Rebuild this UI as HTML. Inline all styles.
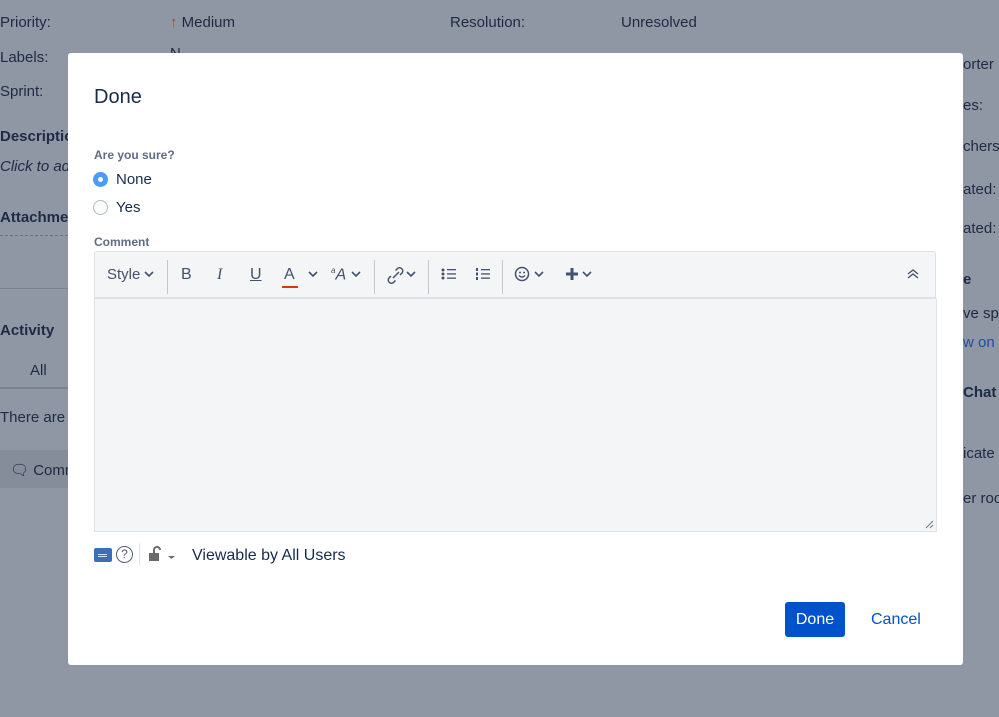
<!DOCTYPE html>
<html><head><style>
body{margin:0;width:999px;height:717px;background:#8f96a4;font-family:"Liberation Sans",sans-serif;position:relative;overflow:hidden;color:#172b4d}
.bg{position:absolute;font-size:15px;color:#1f2a44;white-space:nowrap}
.m{position:absolute;left:68px;top:53px;width:895px;height:612px;background:#fff;border-radius:3px}
.a{position:absolute}
.tb{position:absolute;left:94px;top:251px;width:842px;height:48px;background:#f4f5f7;border:1px solid #dfe1e6;border-bottom:2px solid #dfe1e6;border-radius:3px 3px 0 0;box-sizing:border-box}
.ed{position:absolute;left:94px;top:299px;width:843px;height:233px;background:#f4f5f7;border:1px solid #dfe1e6;border-top:none;box-sizing:border-box}
.sep{position:absolute;top:8px;width:1px;height:34px;background:#c1c7d0}
.ic{position:absolute;top:14px;font-size:16px;color:#42526e}
.chev{position:absolute;top:18px}
</style></head><body>
<div class="bg" style="left:0;top:14px">Priority:</div>
<div class="bg" style="left:170px;top:14px"><span style="color:#a0522d">↑</span> Medium</div>
<div class="bg" style="left:450px;top:14px">Resolution:</div>
<div class="bg" style="left:621px;top:14px">Unresolved</div>
<div class="bg" style="left:0;top:49px">Labels:</div>
<div class="bg" style="left:170px;top:45px">N</div>
<div class="bg" style="left:0;top:83px">Sprint:</div>
<div class="bg" style="left:0;top:128px;font-weight:bold">Description</div>
<div class="bg" style="left:0;top:158px;font-style:italic">Click to add</div>
<div class="bg" style="left:0;top:209px;font-weight:bold">Attachments</div>
<div class="a" style="left:0;top:235px;width:68px;border-top:1px dashed #6b7280"></div>
<div class="a" style="left:0;top:288px;width:68px;border-top:1px solid #7a8190"></div>
<div class="bg" style="left:0;top:322px;font-weight:bold">Activity</div>
<div class="bg" style="left:30px;top:362px">All</div>
<div class="a" style="left:0;top:387px;width:68px;border-top:2px solid #7a8190"></div>
<div class="bg" style="left:0;top:409px">There are</div>
<div class="a" style="left:0;top:450px;width:68px;height:38px;background:#858c9a"></div>
<div class="bg" style="left:10px;top:461px">🗨 Comm</div>
<div class="bg" style="left:963px;top:56px">orter</div>
<div class="bg" style="left:963px;top:97px">es:</div>
<div class="bg" style="left:963px;top:138px">chers</div>
<div class="bg" style="left:963px;top:181px">ated:</div>
<div class="bg" style="left:963px;top:220px">ated:</div>
<div class="bg" style="left:963px;top:271px;font-weight:bold">e</div>
<div class="bg" style="left:963px;top:305px">ve sp</div>
<div class="bg" style="left:963px;top:334px;color:#1d4fa8">w on E</div>
<div class="bg" style="left:963px;top:384px;font-weight:bold">Chat</div>
<div class="bg" style="left:963px;top:445px">icate</div>
<div class="bg" style="left:963px;top:490px">er roo</div>

<div class="m"></div>
<div class="a" style="left:94px;top:86px;font-size:20px">Done</div>
<div class="a" style="left:94px;top:148px;font-size:12px;font-weight:bold;color:#5e6c84">Are you sure?</div>
<div class="a" style="left:93px;top:172px;width:15px;height:15px;border-radius:50%;background:#4c9aff"><div style="position:absolute;left:5px;top:5px;width:5px;height:5px;border-radius:50%;background:#fff"></div></div>
<div class="a" style="left:116px;top:171px;font-size:15px">None</div>
<div class="a" style="left:93px;top:200px;width:13px;height:13px;border-radius:50%;border:1px solid #b3bac5;background:#fafbfc"></div>
<div class="a" style="left:116px;top:199px;font-size:15px">Yes</div>
<div class="a" style="left:94px;top:235px;font-size:12px;font-weight:bold;color:#5e6c84">Comment</div>
<div class="tb">
 <div class="ic" style="left:12px;font-size:15px">Style</div>
 <svg class="chev" style="left:49px" width="10" height="8"><path d="M1 2l4 4 4-4" stroke="#42526e" stroke-width="1.6" fill="none"/></svg>
 <div class="sep" style="left:72px"></div>
 <div class="ic" style="left:86px">B</div>
 <div class="ic" style="left:122px;font-style:italic;font-family:'Liberation Serif',serif">I</div>
 <div class="ic" style="left:155px;text-decoration:underline">U</div>
 <div class="ic" style="left:189px">A</div>
 <div class="a" style="left:187px;top:34px;width:16px;height:2px;background:#de350b"></div>
 <svg class="chev" style="left:213px" width="10" height="8"><path d="M1 2l4 4 4-4" stroke="#42526e" stroke-width="1.6" fill="none"/></svg>
 <div class="ic" style="left:236px;font-style:italic"><sup style="font-size:8px">a</sup>A</div>
 <svg class="chev" style="left:256px" width="10" height="8"><path d="M1 2l4 4 4-4" stroke="#42526e" stroke-width="1.6" fill="none"/></svg>
 <div class="sep" style="left:279px"></div>
 <svg class="a" style="left:290px;top:13px" width="22" height="22"><path d="M8 13l6-6M6 11l-2 2a3.2 3.2 0 004.5 4.5l2-2M15 10l2-2a3.2 3.2 0 00-4.5-4.5l-2 2" stroke="#42526e" stroke-width="1.5" fill="none"/></svg>
 <svg class="chev" style="left:311px" width="10" height="8"><path d="M1 2l4 4 4-4" stroke="#42526e" stroke-width="1.6" fill="none"/></svg>
 <div class="sep" style="left:333px"></div>
 <svg class="a" style="left:346px;top:15px" width="16" height="14"><g fill="#42526e"><circle cx="2" cy="3" r="1.5"/><circle cx="2" cy="7" r="1.5"/><circle cx="2" cy="11" r="1.5"/><rect x="6" y="2" width="9" height="1.3"/><rect x="6" y="6.3" width="9" height="1.3"/><rect x="6" y="10.5" width="9" height="1.3"/></g></svg>
 <svg class="a" style="left:380px;top:15px" width="16" height="14"><g fill="#42526e"><rect x="1" y="1" width="2" height="3"/><rect x="1" y="5.5" width="2" height="3"/><rect x="1" y="10" width="2" height="3"/><rect x="6" y="2" width="9" height="1.3"/><rect x="6" y="6.3" width="9" height="1.3"/><rect x="6" y="10.5" width="9" height="1.3"/></g></svg>
 <div class="sep" style="left:407px"></div>
 <svg class="a" style="left:419px;top:14px" width="18" height="18"><circle cx="8" cy="8" r="6.5" stroke="#42526e" stroke-width="1.5" fill="none"/><circle cx="6" cy="6.5" r="1" fill="#42526e"/><circle cx="10" cy="6.5" r="1" fill="#42526e"/><path d="M5 9.5q3 3 6 0" stroke="#42526e" stroke-width="1.3" fill="none"/></svg>
 <svg class="chev" style="left:439px" width="10" height="8"><path d="M1 2l4 4 4-4" stroke="#42526e" stroke-width="1.6" fill="none"/></svg>
 <svg class="a" style="left:470px;top:15px" width="14" height="14"><path d="M7 1v12M1 7h12" stroke="#42526e" stroke-width="3"/></svg>
 <svg class="chev" style="left:487px" width="10" height="8"><path d="M1 2l4 4 4-4" stroke="#42526e" stroke-width="1.6" fill="none"/></svg>
 <svg class="a" style="left:812px;top:17px" width="12" height="10"><path d="M1 5l5-4 5 4M1 9l5-4 5 4" stroke="#42526e" stroke-width="1.3" fill="none"/></svg>
</div>
<div class="ed"><svg style="position:absolute;right:2px;bottom:2px" width="9" height="9"><path d="M8 1L1 8M8 5L5 8" stroke="#6b778c"/></svg></div>
<div class="a" style="left:94px;top:548px;width:18px;height:14px;background:#3b6fb6;border-radius:2px"><div style="position:absolute;left:4px;top:6px;width:9px;height:1px;background:#cfe0f7;box-shadow:0 2px 0 #cfe0f7"></div></div>
<div class="a" style="left:116px;top:546px;width:15px;height:15px;border:1.5px solid #505f79;border-radius:50%;font-size:12px;text-align:center;line-height:15px;color:#505f79">?</div>
<div class="a" style="left:139px;top:543px;width:1px;height:22px;background:#dfe1e6"></div>
<svg class="a" style="left:148px;top:545px" width="30" height="18"><path d="M6 8V5a3 3 0 016 0" stroke="#6b6b6b" stroke-width="2" fill="none"/><rect x="1" y="8" width="10" height="8" fill="#6b6b6b"/><path d="M20 11h7l-3.5 3z" fill="#6b6b6b"/></svg>
<div class="a" style="left:192px;top:547px;font-size:16px">Viewable by All Users</div>
<div class="a" style="left:785px;top:602px;width:60px;height:35px;background:#0052cc;border-radius:3px;color:#fff;font-size:16px;text-align:center;line-height:36px">Done</div>
<div class="a" style="left:871px;top:611px;font-size:16px;color:#0052cc">Cancel</div>
</body></html>
